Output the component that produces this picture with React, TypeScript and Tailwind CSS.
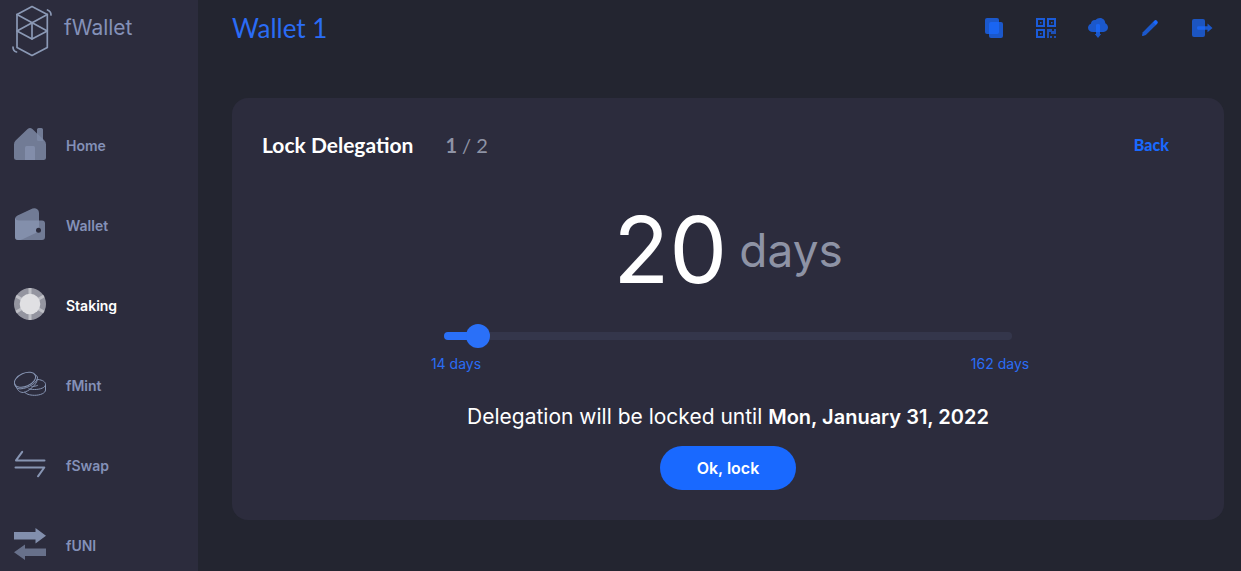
import React, { useState } from 'react';

const MIN_DAYS = 14;
const MAX_DAYS = 162;

const HomeIcon: React.FC = () => (
  <svg viewBox="0 0 32 32" className="h-8 w-8" fill="#8f9dbb" aria-hidden="true">
    <path
      opacity="0.7"
      d="M0 16.5Q0 14.2 1.6 12.6L13.6 1Q16 -1 18.4 1L23 5.4V1.6Q23 0 24.6 0H27.4Q29 0 29 1.6V11.1L30.4 12.6Q32 14.2 32 16.5V29.5Q32 32 29.5 32H2.5Q0 32 0 29.5Z"
    />
    <path opacity="0.55" d="M11 19.5Q11 18 12.5 18H19.5Q21 18 21 19.5V32H11Z" />
    <path opacity="0.4" d="M23 5.4L29 11.1V13H24.5Q23 13 23 11.5Z" />
  </svg>
);

const WalletIcon: React.FC = () => (
  <svg viewBox="0 0 32 32" className="h-8 w-8" fill="#8f9dbb" aria-hidden="true">
    <path opacity="0.7" d="M1 11Q1 8.5 3.5 7.4L18.5 .6Q21 -.5 23.3 1.2Q25 2.5 25 5V12.5H28Q31 12.5 31 15.5V29Q31 32 28 32H4Q1 32 1 29Z" />
    <path opacity="0.6" d="M1 10Q2 12.5 5 12.5H25V23.5L8 31.5Q6.5 32 4 32Q1 32 1 29Z" />
    <circle cx="24.5" cy="22.3" r="2.5" fill="#2c2c3d" />
  </svg>
);

const StakingIcon: React.FC = () => (
  <svg viewBox="0 0 32 32" className="h-8 w-8" aria-hidden="true">
    <circle cx="16" cy="16" r="16" fill="#9495a0" />
    <g stroke="#bfc0c7" strokeWidth="3">
      <path d="M16 0V32" />
      <path d="M2.1 8L29.9 24" />
      <path d="M2.1 24L29.9 8" />
    </g>
    <circle cx="16" cy="16" r="10.3" fill="#e0e0e3" />
  </svg>
);

const MintIcon: React.FC = () => (
  <svg viewBox="0 0 32 32" className="h-8 w-8" fill="none" stroke="#8795b3" strokeWidth="1" aria-hidden="true">
    <ellipse cx="11" cy="11.8" rx="11.2" ry="6.6" transform="rotate(-24 11 11.8)" />
    <path d="M.7 15.5C1 18.5 2.5 21 6 20.9C15 20.5 24 14 23.5 9L21.3 6.5" />
    <path d="M2.5 18.5C3 21.5 5 24.5 9.5 24.5C14.5 23.3 22.5 17.5 23.5 11" />
    <path d="M24 11.5C28.5 12 31.5 13.8 31.5 16.5C31.5 19.5 26.5 21.5 20.5 21.5C18 21.5 16 21.2 14.5 20.7" />
    <path d="M31.5 16.5V22C31.5 25 26.5 27.3 20.5 27.3C15.5 27.3 11.5 25.8 10.5 23.8" />
    <path d="M17.5 18.5C20.5 18.5 24 17.5 24 17" />
  </svg>
);

const SwapIcon: React.FC = () => (
  <svg viewBox="0 0 32 32" className="h-8 w-8" fill="none" stroke="#8795b3" strokeWidth="2" strokeLinecap="round" strokeLinejoin="round" aria-hidden="true">
    <path d="M30.5 12.4H2L8.2 3.8" />
    <path d="M1.5 19.5H30.3L24 28.3" />
  </svg>
);

const UniIcon: React.FC = () => (
  <svg viewBox="0 0 32 32" className="h-8 w-8" fill="#8795b3" aria-hidden="true">
    <path opacity="0.95" d="M0 4H21.5V0L32 7.7L21.5 15.5V11.5H0Z" />
    <path opacity="0.65" d="M32 20.5H11V16.5L0 24.3L11 32V28H32Z" />
  </svg>
);

const LogoIcon: React.FC = () => (
  <svg viewBox="0 0 40 52" className="h-[52px] w-10" fill="none" stroke="#8b99b5" strokeWidth="1.7" strokeLinejoin="round" strokeLinecap="round" aria-hidden="true">
    <path d="M20 1.5L35.3 9.5V42.5L20 50.5L5 42.5V9.5Z" />
    <path d="M5 9.5L35.3 26L20 34L5 26L35.3 9.5" />
    <path d="M20 18V34" />
    <path d="M35.5 5C37.5 5.7 39 7.5 39 10" />
    <path d="M1 42C1 44.5 2.5 46.5 4.5 47" />
  </svg>
);

const CopyIcon: React.FC = () => (
  <svg viewBox="0 0 20 20" className="h-5 w-5" fill="#1969ff" aria-hidden="true">
    <rect opacity="0.75" x="1" width="14" height="16" rx="2" />
    <rect opacity="0.75" x="5" y="4" width="14" height="16" rx="2" />
  </svg>
);

const QrIcon: React.FC = () => (
  <svg viewBox="0 0 20 20" className="h-5 w-5" fill="#1b5bd8" aria-hidden="true">
    <path fillRule="evenodd" d="M0 0H9V9H0ZM2 2V7H7V2ZM11 0H20V9H11ZM13 2V7H18V2ZM0 11H9V20H0ZM2 13V18H7V13Z" />
    <path d="M4 4H5.5V5.5H4ZM15 4H16.5V5.5H15ZM4 15H5.5V16.5H4Z" />
    <path opacity="0.8" d="M11 11H16V13H18V11H20V16H15V14H13V20H11ZM14 18H16V20H14ZM18 18H20V20H18Z" />
  </svg>
);

const CloudIcon: React.FC = () => (
  <svg viewBox="0 0 20 20" className="h-5 w-5" fill="#1969ff" aria-hidden="true">
    <path opacity="0.75" d="M5 14C2 14 0 12.3 0 9.8C0 7.8 1.3 6.2 3 5.7C3 3.3 5 1.8 7.5 2.1C8.6 .7 10.2 0 12 0C15 0 17.3 2.3 17.3 5.3C19 6 20 7.7 20 9.6C20 12 18 14 15.5 14Z" />
    <path opacity="0.75" d="M8 7Q8 6 10 6Q12 6 12 7V16H13.2L10 20L6.8 16H8Z" />
  </svg>
);

const EditIcon: React.FC = () => (
  <svg viewBox="0 0 20 20" className="h-5 w-5" fill="#1969ff" aria-hidden="true">
    <path opacity="0.75" d="M2.8 14.2L13 4L16 7L5.8 17L3 18Q2 18.3 2 17.3Z" />
    <path d="M12.8 4.2L14.3 2.7Q15.5 1.5 17 2.8Q18.6 4.3 17.4 5.6L15.8 7.2Z" />
  </svg>
);

const LogoutIcon: React.FC = () => (
  <svg viewBox="0 0 20 20" className="h-5 w-5 overflow-visible" fill="#1969ff" aria-hidden="true">
    <rect opacity="0.7" y="1" width="13" height="18" rx="2" />
    <path opacity="0.75" d="M6 8.2H15.5V5.5L20.5 10L15.5 14.3V11.8H6Q5 11.8 5 10Q5 8.2 6 8.2Z" />
  </svg>
);

const navItems = [
  { label: 'Home', icon: HomeIcon },
  { label: 'Wallet', icon: WalletIcon },
  { label: 'Staking', icon: StakingIcon, active: true },
  { label: 'fMint', icon: MintIcon },
  { label: 'fSwap', icon: SwapIcon },
  { label: 'fUNI', icon: UniIcon },
];

const actions = [
  { label: 'Copy address', icon: CopyIcon },
  { label: 'Show QR code', icon: QrIcon },
  { label: 'Download keystore', icon: CloudIcon },
  { label: 'Rename wallet', icon: EditIcon },
  { label: 'Log out', icon: LogoutIcon },
];

const Sidebar: React.FC = () => (
  <aside className="w-[198px] shrink-0 bg-[#2c2c3d] pb-3 text-[#8491b8]">
    <a href="#" className="flex items-start gap-3 pt-[5px] pl-3">
      <LogoIcon />
      <span className="pt-2 text-[21px] leading-[30px]">fWallet</span>
    </a>
    <nav className="flex flex-col gap-12 pt-[71px] pl-[14px]">
      {navItems.map(({ label, icon: Icon, active }) => (
        <a
          key={label}
          href="#"
          className={`flex items-center gap-5 text-sm font-semibold ${active ? 'text-white' : ''}`}
        >
          <Icon />
          <span className="pt-1 leading-7">{label}</span>
        </a>
      ))}
    </nav>
  </aside>
);

const LockDelegation: React.FC = () => {
  const [days, setDays] = useState(20);

  // The fill ends just under the thumb
  const filled = ((days - MIN_DAYS) / (MAX_DAYS - MIN_DAYS)) * 100 + 1;

  const until = new Date(2022, 0, 11 + days).toLocaleDateString('en-US', {
    weekday: 'short',
    month: 'long',
    day: 'numeric',
    year: 'numeric',
  });

  return (
    <section className="rounded-2xl bg-[#2c2c3d] px-[30px] pt-8 pb-[30px]">
      <div className="flex items-center justify-between pr-[25px]">
        <h2 className="flex items-baseline gap-8 font-['Lato',sans-serif] text-[21px] leading-[30px] font-bold text-white">
          Lock Delegation
          <span className="text-xl leading-[30px] font-normal text-[#8e93a5]">
            <b>1</b> / 2
          </span>
        </h2>
        <a href="#" className="font-['Lato',sans-serif] text-base font-black text-[#1969ff]">
          Back
        </a>
      </div>

      <div className="flex flex-col items-center">
        <div className="mt-[34px] flex items-center gap-3 leading-[112px]">
          <span className="text-[92px] text-white">20</span>
          <span className="text-[46px] text-[#8e93a5]">days</span>
        </div>

        <div className="mt-[26px] w-full max-w-[568px]">
          <input
            type="range"
            aria-label="Lock period in days"
            min={MIN_DAYS}
            max={MAX_DAYS}
            value={days}
            onChange={(e) => setDays(Number(e.target.value))}
            className="block h-2 w-full cursor-pointer appearance-none rounded-full [&::-webkit-slider-thumb]:h-6 [&::-webkit-slider-thumb]:w-6 [&::-webkit-slider-thumb]:appearance-none [&::-webkit-slider-thumb]:rounded-full [&::-webkit-slider-thumb]:bg-[#2a70f8]"
            style={{ background: `linear-gradient(to right, #2a70f8 ${filled}%, #34364b ${filled}%)` }}
          />
          <div className="-mx-[18px] mt-[14px] flex justify-between text-sm text-[#2a6cf5]">
            <span className="w-[60px] text-center whitespace-nowrap">{MIN_DAYS} days</span>
            <span className="w-[60px] text-center whitespace-nowrap">{MAX_DAYS} days</span>
          </div>
        </div>

        <p className="mt-7 text-[21px] leading-[30px] text-white">
          Delegation will be locked until <b className="text-xl font-semibold">{until}</b>
        </p>
        <button type="button" className="mt-[14px] h-11 rounded-full bg-[#1969ff] px-[37px] font-semibold text-white">
          Ok, lock
        </button>
      </div>
    </section>
  );
};

const App: React.FC = () => {
  return (
    <div className="flex min-h-screen bg-[#232530] font-['Inter',sans-serif]">
      <Sidebar />
      <main className="min-w-0 flex-1 pr-[17px] pl-[34px]">
        <header className="flex h-14 items-center justify-between pr-3">
          <h1 className="font-['Lato',sans-serif] text-[26px] text-[#2a6cf5]">Wallet 1</h1>
          <div className="flex gap-8">
            {actions.map(({ label, icon: Icon }) => (
              <button key={label} type="button" aria-label={label} className="cursor-pointer">
                <Icon />
              </button>
            ))}
          </div>
        </header>
        <div className="pt-[42px]">
          <LockDelegation />
        </div>
      </main>
    </div>
  );
};

export default App;
